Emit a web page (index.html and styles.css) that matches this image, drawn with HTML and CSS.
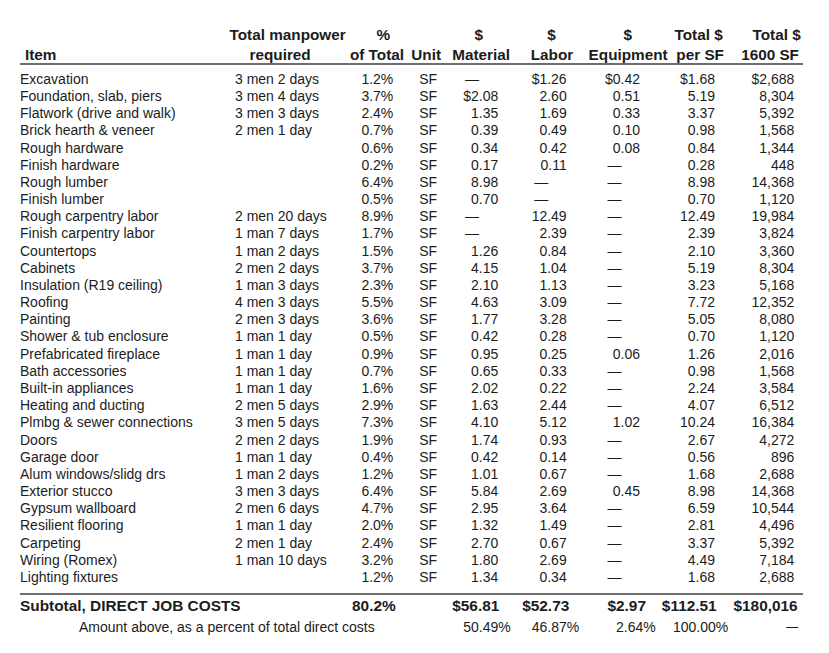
FILE: index.html
```html
<!DOCTYPE html>
<html lang="en">
<head>
<meta charset="utf-8">
<title>Direct job costs</title>
<link rel="stylesheet" href="styles.css">
</head>
<body>
<div class="table">
  <div class="row head">
    <div class="c it one"><span>Item</span></div>
    <div class="c"><span>Total manpower</span><span>required</span></div>
    <div class="c"><span>%</span><span>of Total</span></div>
    <div class="c one"><span>Unit</span></div>
    <div class="c"><span>$</span><span>Material</span></div>
    <div class="c"><span>$</span><span>Labor</span></div>
    <div class="c"><span>$</span><span>Equipment</span></div>
    <div class="c"><span>Total $</span><span>per SF</span></div>
    <div class="c"><span>Total $</span><span>1600 SF</span></div>
  </div>
  <div class="body">
    <div class="row"><div class="c">Excavation</div><div class="c">3 men 2 days</div><div class="c n">1.2%</div><div class="c u">SF</div><div class="c n"><span class="d">—</span></div><div class="c n">$1.26</div><div class="c n">$0.42</div><div class="c n">$1.68</div><div class="c n">$2,688</div></div>
    <div class="row"><div class="c">Foundation, slab, piers</div><div class="c">3 men 4 days</div><div class="c n">3.7%</div><div class="c u">SF</div><div class="c n">$2.08</div><div class="c n">2.60</div><div class="c n">0.51</div><div class="c n">5.19</div><div class="c n">8,304</div></div>
    <div class="row"><div class="c">Flatwork (drive and walk)</div><div class="c">3 men 3 days</div><div class="c n">2.4%</div><div class="c u">SF</div><div class="c n">1.35</div><div class="c n">1.69</div><div class="c n">0.33</div><div class="c n">3.37</div><div class="c n">5,392</div></div>
    <div class="row"><div class="c">Brick hearth &amp; veneer</div><div class="c">2 men 1 day</div><div class="c n">0.7%</div><div class="c u">SF</div><div class="c n">0.39</div><div class="c n">0.49</div><div class="c n">0.10</div><div class="c n">0.98</div><div class="c n">1,568</div></div>
    <div class="row"><div class="c">Rough hardware</div><div class="c"></div><div class="c n">0.6%</div><div class="c u">SF</div><div class="c n">0.34</div><div class="c n">0.42</div><div class="c n">0.08</div><div class="c n">0.84</div><div class="c n">1,344</div></div>
    <div class="row"><div class="c">Finish hardware</div><div class="c"></div><div class="c n">0.2%</div><div class="c u">SF</div><div class="c n">0.17</div><div class="c n">0.11</div><div class="c n"><span class="d">—</span></div><div class="c n">0.28</div><div class="c n">448</div></div>
    <div class="row"><div class="c">Rough lumber</div><div class="c"></div><div class="c n">6.4%</div><div class="c u">SF</div><div class="c n">8.98</div><div class="c n"><span class="d">—</span></div><div class="c n"><span class="d">—</span></div><div class="c n">8.98</div><div class="c n">14,368</div></div>
    <div class="row"><div class="c">Finish lumber</div><div class="c"></div><div class="c n">0.5%</div><div class="c u">SF</div><div class="c n">0.70</div><div class="c n"><span class="d">—</span></div><div class="c n"><span class="d">—</span></div><div class="c n">0.70</div><div class="c n">1,120</div></div>
    <div class="row"><div class="c">Rough carpentry labor</div><div class="c">2 men 20 days</div><div class="c n">8.9%</div><div class="c u">SF</div><div class="c n"><span class="d">—</span></div><div class="c n">12.49</div><div class="c n"><span class="d">—</span></div><div class="c n">12.49</div><div class="c n">19,984</div></div>
    <div class="row"><div class="c">Finish carpentry labor</div><div class="c">1 man 7 days</div><div class="c n">1.7%</div><div class="c u">SF</div><div class="c n"><span class="d">—</span></div><div class="c n">2.39</div><div class="c n"><span class="d">—</span></div><div class="c n">2.39</div><div class="c n">3,824</div></div>
    <div class="row"><div class="c">Countertops</div><div class="c">1 man 2 days</div><div class="c n">1.5%</div><div class="c u">SF</div><div class="c n">1.26</div><div class="c n">0.84</div><div class="c n"><span class="d">—</span></div><div class="c n">2.10</div><div class="c n">3,360</div></div>
    <div class="row"><div class="c">Cabinets</div><div class="c">2 men 2 days</div><div class="c n">3.7%</div><div class="c u">SF</div><div class="c n">4.15</div><div class="c n">1.04</div><div class="c n"><span class="d">—</span></div><div class="c n">5.19</div><div class="c n">8,304</div></div>
    <div class="row"><div class="c">Insulation (R19 ceiling)</div><div class="c">1 man 3 days</div><div class="c n">2.3%</div><div class="c u">SF</div><div class="c n">2.10</div><div class="c n">1.13</div><div class="c n"><span class="d">—</span></div><div class="c n">3.23</div><div class="c n">5,168</div></div>
    <div class="row"><div class="c">Roofing</div><div class="c">4 men 3 days</div><div class="c n">5.5%</div><div class="c u">SF</div><div class="c n">4.63</div><div class="c n">3.09</div><div class="c n"><span class="d">—</span></div><div class="c n">7.72</div><div class="c n">12,352</div></div>
    <div class="row"><div class="c">Painting</div><div class="c">2 men 3 days</div><div class="c n">3.6%</div><div class="c u">SF</div><div class="c n">1.77</div><div class="c n">3.28</div><div class="c n"><span class="d">—</span></div><div class="c n">5.05</div><div class="c n">8,080</div></div>
    <div class="row"><div class="c">Shower &amp; tub enclosure</div><div class="c">1 man 1 day</div><div class="c n">0.5%</div><div class="c u">SF</div><div class="c n">0.42</div><div class="c n">0.28</div><div class="c n"><span class="d">—</span></div><div class="c n">0.70</div><div class="c n">1,120</div></div>
    <div class="row"><div class="c">Prefabricated fireplace</div><div class="c">1 man 1 day</div><div class="c n">0.9%</div><div class="c u">SF</div><div class="c n">0.95</div><div class="c n">0.25</div><div class="c n">0.06</div><div class="c n">1.26</div><div class="c n">2,016</div></div>
    <div class="row"><div class="c">Bath accessories</div><div class="c">1 man 1 day</div><div class="c n">0.7%</div><div class="c u">SF</div><div class="c n">0.65</div><div class="c n">0.33</div><div class="c n"><span class="d">—</span></div><div class="c n">0.98</div><div class="c n">1,568</div></div>
    <div class="row"><div class="c">Built-in appliances</div><div class="c">1 man 1 day</div><div class="c n">1.6%</div><div class="c u">SF</div><div class="c n">2.02</div><div class="c n">0.22</div><div class="c n"><span class="d">—</span></div><div class="c n">2.24</div><div class="c n">3,584</div></div>
    <div class="row"><div class="c">Heating and ducting</div><div class="c">2 men 5 days</div><div class="c n">2.9%</div><div class="c u">SF</div><div class="c n">1.63</div><div class="c n">2.44</div><div class="c n"><span class="d">—</span></div><div class="c n">4.07</div><div class="c n">6,512</div></div>
    <div class="row"><div class="c">Plmbg &amp; sewer connections</div><div class="c">3 men 5 days</div><div class="c n">7.3%</div><div class="c u">SF</div><div class="c n">4.10</div><div class="c n">5.12</div><div class="c n">1.02</div><div class="c n">10.24</div><div class="c n">16,384</div></div>
    <div class="row"><div class="c">Doors</div><div class="c">2 men 2 days</div><div class="c n">1.9%</div><div class="c u">SF</div><div class="c n">1.74</div><div class="c n">0.93</div><div class="c n"><span class="d">—</span></div><div class="c n">2.67</div><div class="c n">4,272</div></div>
    <div class="row"><div class="c">Garage door</div><div class="c">1 man 1 day</div><div class="c n">0.4%</div><div class="c u">SF</div><div class="c n">0.42</div><div class="c n">0.14</div><div class="c n"><span class="d">—</span></div><div class="c n">0.56</div><div class="c n">896</div></div>
    <div class="row"><div class="c">Alum windows/slidg drs</div><div class="c">1 man 2 days</div><div class="c n">1.2%</div><div class="c u">SF</div><div class="c n">1.01</div><div class="c n">0.67</div><div class="c n"><span class="d">—</span></div><div class="c n">1.68</div><div class="c n">2,688</div></div>
    <div class="row"><div class="c">Exterior stucco</div><div class="c">3 men 3 days</div><div class="c n">6.4%</div><div class="c u">SF</div><div class="c n">5.84</div><div class="c n">2.69</div><div class="c n">0.45</div><div class="c n">8.98</div><div class="c n">14,368</div></div>
    <div class="row"><div class="c">Gypsum wallboard</div><div class="c">2 men 6 days</div><div class="c n">4.7%</div><div class="c u">SF</div><div class="c n">2.95</div><div class="c n">3.64</div><div class="c n"><span class="d">—</span></div><div class="c n">6.59</div><div class="c n">10,544</div></div>
    <div class="row"><div class="c">Resilient flooring</div><div class="c">1 man 1 day</div><div class="c n">2.0%</div><div class="c u">SF</div><div class="c n">1.32</div><div class="c n">1.49</div><div class="c n"><span class="d">—</span></div><div class="c n">2.81</div><div class="c n">4,496</div></div>
    <div class="row"><div class="c">Carpeting</div><div class="c">2 men 1 day</div><div class="c n">2.4%</div><div class="c u">SF</div><div class="c n">2.70</div><div class="c n">0.67</div><div class="c n"><span class="d">—</span></div><div class="c n">3.37</div><div class="c n">5,392</div></div>
    <div class="row"><div class="c">Wiring (Romex)</div><div class="c">1 man 10 days</div><div class="c n">3.2%</div><div class="c u">SF</div><div class="c n">1.80</div><div class="c n">2.69</div><div class="c n"><span class="d">—</span></div><div class="c n">4.49</div><div class="c n">7,184</div></div>
    <div class="row"><div class="c">Lighting fixtures</div><div class="c"></div><div class="c n">1.2%</div><div class="c u">SF</div><div class="c n">1.34</div><div class="c n">0.34</div><div class="c n"><span class="d">—</span></div><div class="c n">1.68</div><div class="c n">2,688</div></div>
  </div>
  <div class="row sub">
    <div class="c label">Subtotal, DIRECT JOB COSTS</div>
    <div class="c n">80.2%</div>
    <div class="c"></div>
    <div class="c n">$56.81</div>
    <div class="c n">$52.73</div>
    <div class="c n">$2.97</div>
    <div class="c n">$112.51</div>
    <div class="c n">$180,016</div>
  </div>
  <div class="row pct">
    <div class="c label">Amount above, as a percent of total direct costs</div>
    <div class="c n">50.49%</div>
    <div class="c n">46.87%</div>
    <div class="c n">2.64%</div>
    <div class="c n">100.00%</div>
    <div class="c n"><span class="fd">—</span></div>
  </div>
</div>
</body>
</html>
```

FILE: styles.css
```css
* {
  box-sizing: border-box;
  margin: 0;
  padding: 0;
}

html, body {
  background: #ffffff;
}

body {
  margin: 0;
  color: #1c1c1c;
  font-family: "Liberation Sans", Arial, Helvetica, sans-serif;
  font-size: 14px;
  line-height: 17.17px;
}

.table {
  width: 783px;
  margin-left: 20px;
  padding-top: 25px;
}

.row {
  display: grid;
  grid-template-columns: 215px 105px 53.3px 69.7px 35.3px 68.4px 73.3px 75px 79.3px;
}

.c {
  display: flex;
  white-space: nowrap;
  min-width: 0;
}

.n {
  justify-content: flex-end;
}

.u {
  justify-content: center;
}

/* dash placeholders sit left of the figure column */
.d {
  margin-right: 18.4px;
}

.row > :nth-child(5) .d {
  margin-right: 19.3px;
}

/* ---------- header ---------- */
.head {
  grid-template-rows: 37.5px;
  font-weight: bold;
  font-size: 15.3px;
  line-height: 19.5px;
  border-bottom: 2px solid #6e6e6e;
}

.head .c {
  flex-direction: column;
  align-items: flex-end;
  justify-content: flex-start;
}

.head .one {
  padding-top: 19.5px;
}

.head .it {
  align-items: flex-start;
  padding-left: 5px;
}

.head > :nth-child(2) > :nth-child(1) { margin-right: -5.7px; }
.head > :nth-child(2) > :nth-child(2) { margin-right: 29.3px; }
.head > :nth-child(3) > :nth-child(1) { margin-right: 3.3px; }
.head > :nth-child(3) > :nth-child(2) { margin-right: -10.7px; }
.head > :nth-child(4) > :nth-child(1) { margin-right: 22px; }
.head > :nth-child(5) > :nth-child(1) { margin-right: 15.3px; }
.head > :nth-child(5) > :nth-child(2) { margin-right: -11.7px; }
.head > :nth-child(6) > :nth-child(1) { margin-right: 11px; }
.head > :nth-child(6) > :nth-child(2) { margin-right: -6.6px; }
.head > :nth-child(7) > :nth-child(1) { margin-right: 8px; }
.head > :nth-child(7) > :nth-child(2) { margin-right: -27.7px; }
.head > :nth-child(8) > :nth-child(1) { margin-right: -7.7px; }
.head > :nth-child(8) > :nth-child(2) { margin-right: -9px; }
.head > :nth-child(9) > :nth-child(1) { margin-right: -6.4px; }
.head > :nth-child(9) > :nth-child(2) { margin-right: -4.7px; }

/* ---------- body ---------- */
.body {
  padding: 6.4px 0 6.5px;
  border-bottom: 2px solid #6e6e6e;
}

/* ---------- subtotal ---------- */
.sub {
  padding-top: 1.7px;
  font-weight: bold;
  font-size: 15.4px;
  line-height: 20px;
}

.sub .label {
  grid-column: span 2;
}

.sub > :nth-child(2) { margin-right: -2.4px; }
.sub > :nth-child(4) { margin-right: -1px; }
.sub > :nth-child(5) { margin-right: -2.6px; }
.sub > :nth-child(6) { margin-right: -6px; }
.sub > :nth-child(7) { margin-right: -1.7px; }
.sub > :nth-child(8) { margin-right: -3.4px; }

/* ---------- percent row ---------- */
.pct {
  margin-top: 3.1px;
}

.pct .label {
  grid-column: span 4;
  padding-left: 59px;
}

.pct > :nth-child(2) { margin-right: -12.4px; }
.pct > :nth-child(3) { margin-right: -12.6px; }
.pct > :nth-child(4) { margin-right: -15.7px; }
.pct > :nth-child(5) { margin-right: -13.3px; }
.pct > :nth-child(6) { margin-right: -4px; }

.fd {
  font-size: 12px;
}
```
